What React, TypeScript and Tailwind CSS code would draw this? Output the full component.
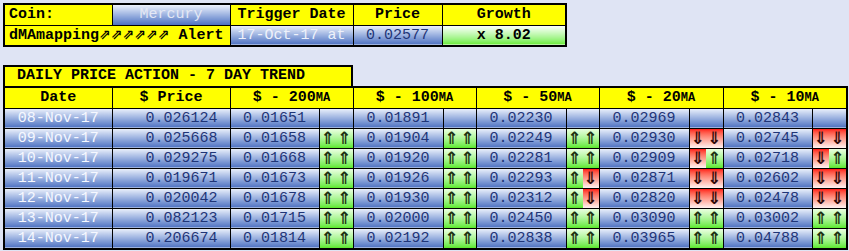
const mono = "font-['Liberation_Mono','DejaVu_Sans_Mono',monospace]";
const blue = 'bg-linear-to-b from-[#eef2fb] to-[#4f72c1]';
const green = 'bg-linear-to-b from-[#eaffe0] to-[#5ce928]';
const red = 'bg-linear-to-b from-[#ff1010] to-[#fff2f2]';
const yellow = 'bg-[#ffff00]';

type Dir = 'u' | 'd';

interface Row {
  date: string;
  price: string;
  ma: string[];
  arrows: (string | null)[];
}

const rows: Row[] = [
  {
    date: '08-Nov-17',
    price: '0.026124',
    ma: ['0.01651', '0.01891', '0.02230', '0.02969', '0.02843'],
    arrows: [null, null, null, null, null],
  },
  {
    date: '09-Nov-17',
    price: '0.025668',
    ma: ['0.01658', '0.01904', '0.02249', '0.02930', '0.02745'],
    arrows: ['uu', 'uu', 'uu', 'dd', 'dd'],
  },
  {
    date: '10-Nov-17',
    price: '0.029275',
    ma: ['0.01668', '0.01920', '0.02281', '0.02909', '0.02718'],
    arrows: ['uu', 'uu', 'uu', 'du', 'du'],
  },
  {
    date: '11-Nov-17',
    price: '0.019671',
    ma: ['0.01673', '0.01926', '0.02293', '0.02871', '0.02602'],
    arrows: ['uu', 'uu', 'ud', 'dd', 'dd'],
  },
  {
    date: '12-Nov-17',
    price: '0.020042',
    ma: ['0.01678', '0.01930', '0.02312', '0.02820', '0.02478'],
    arrows: ['uu', 'uu', 'ud', 'dd', 'dd'],
  },
  {
    date: '13-Nov-17',
    price: '0.082123',
    ma: ['0.01715', '0.02000', '0.02450', '0.03090', '0.03002'],
    arrows: ['uu', 'uu', 'uu', 'uu', 'uu'],
  },
  {
    date: '14-Nov-17',
    price: '0.206674',
    ma: ['0.01814', '0.02192', '0.02838', '0.03965', '0.04788'],
    arrows: ['uu', 'uu', 'uu', 'uu', 'uu'],
  },
];

const maLabels = ['200', '100', '50', '20', '10'];

function Arrow({ dir }: { dir: Dir }) {
  return (
    <div
      className={`flex-1 h-[19px] flex items-center justify-center font-['DejaVu_Sans',sans-serif] text-[17px] font-bold leading-none ${
        dir === 'u' ? `${green} text-[#1c3010]` : `${red} text-[#2e0808]`
      }`}
    >
      {dir === 'u' ? '⇑' : '⇓'}
    </div>
  );
}

function ArrowCell({ value }: { value: string | null }) {
  if (!value) return <td className={`border border-black p-0 ${blue}`} />;
  return (
    <td className="border border-black p-0">
      <div className="flex">
        <Arrow dir={value[0] as Dir} />
        <Arrow dir={value[1] as Dir} />
      </div>
    </td>
  );
}

export default function App() {
  return (
    <div className={`min-h-[251px] w-[849px] bg-[#dfe4f4] pt-[3px] pl-[3px] ${mono}`}>
      <table className="border-collapse table-fixed border-2 border-black text-[15px] leading-none">
        <colgroup>
          <col className="w-[108px]" />
          <col className="w-[118px]" />
          <col className="w-[123px]" />
          <col className="w-[89px]" />
          <col className="w-[124px]" />
        </colgroup>
        <tbody>
          <tr className="h-[21px]">
            <td className={`border border-black px-1 font-bold text-black ${yellow}`}>Coin:</td>
            <td className={`border border-black text-center text-[#e4e8f4] ${blue}`}>Mercury</td>
            <td className={`border border-black text-center font-bold text-black ${yellow}`}>Trigger Date</td>
            <td className={`border border-black text-center font-bold text-black ${yellow}`}>Price</td>
            <td className={`border border-black text-center font-bold text-black ${yellow}`}>Growth</td>
          </tr>
          <tr className="h-[21px]">
            <td colSpan={2} className={`border border-black px-1 whitespace-nowrap font-bold text-black ${yellow}`}>
              dMAmapping<span className="font-['DejaVu_Sans',sans-serif] text-[14px]">⇗⇗⇗⇗⇗⇗</span> Alert
            </td>
            <td className={`border border-black text-center text-[#eef1fa] ${blue}`}>17-Oct-17 at</td>
            <td className={`border border-black text-center text-[#1f3578] ${blue}`}>0.02577</td>
            <td className="border border-black text-center font-bold text-black bg-linear-to-b from-white to-[#6aec36]">
              x 8.02
            </td>
          </tr>
        </tbody>
      </table>

      <div
        className={`mt-[18px] w-[350px] h-[21px] flex items-center border-2 border-b-0 border-black pl-[12px] text-[15px] font-bold text-black ${yellow}`}
      >
        DAILY PRICE ACTION - 7 DAY TREND
      </div>

      <table className="border-collapse table-fixed border-2 border-black text-[15px] leading-none">
        <colgroup>
          <col className="w-[108px]" />
          <col className="w-[118px]" />
          <col className="w-[89px]" />
          <col className="w-[34px]" />
          <col className="w-[90px]" />
          <col className="w-[33px]" />
          <col className="w-[90px]" />
          <col className="w-[33px]" />
          <col className="w-[90px]" />
          <col className="w-[34px]" />
          <col className="w-[89px]" />
          <col className="w-[35px]" />
        </colgroup>
        <tbody>
          <tr className="h-[21px]">
            <td className={`border border-black text-center font-bold text-black ${yellow}`}>Date</td>
            <td className={`border border-black text-center font-bold text-black ${yellow}`}>$ Price</td>
            {maLabels.map((m) => (
              <td key={m} colSpan={2} className={`border border-black text-center font-bold text-black ${yellow}`}>
                $ - {m}
                <span className="text-[12px]">MA</span>
              </td>
            ))}
          </tr>
          {rows.map((r) => (
            <tr key={r.date} className="h-[20px]">
              <td className={`border border-black text-center text-[#f6f8ff] ${blue}`}>{r.date}</td>
              <td className={`border border-black text-right pr-[12px] text-[#1f3578] ${blue}`}>{r.price}</td>
              {r.ma.map((v, i) => (
                <>
                  <td key={`v${i}`} className={`border border-black text-center text-[#1f3578] ${blue}`}>
                    {v}
                  </td>
                  <ArrowCell key={`a${i}`} value={r.arrows[i]} />
                </>
              ))}
            </tr>
          ))}
        </tbody>
      </table>
    </div>
  );
}
